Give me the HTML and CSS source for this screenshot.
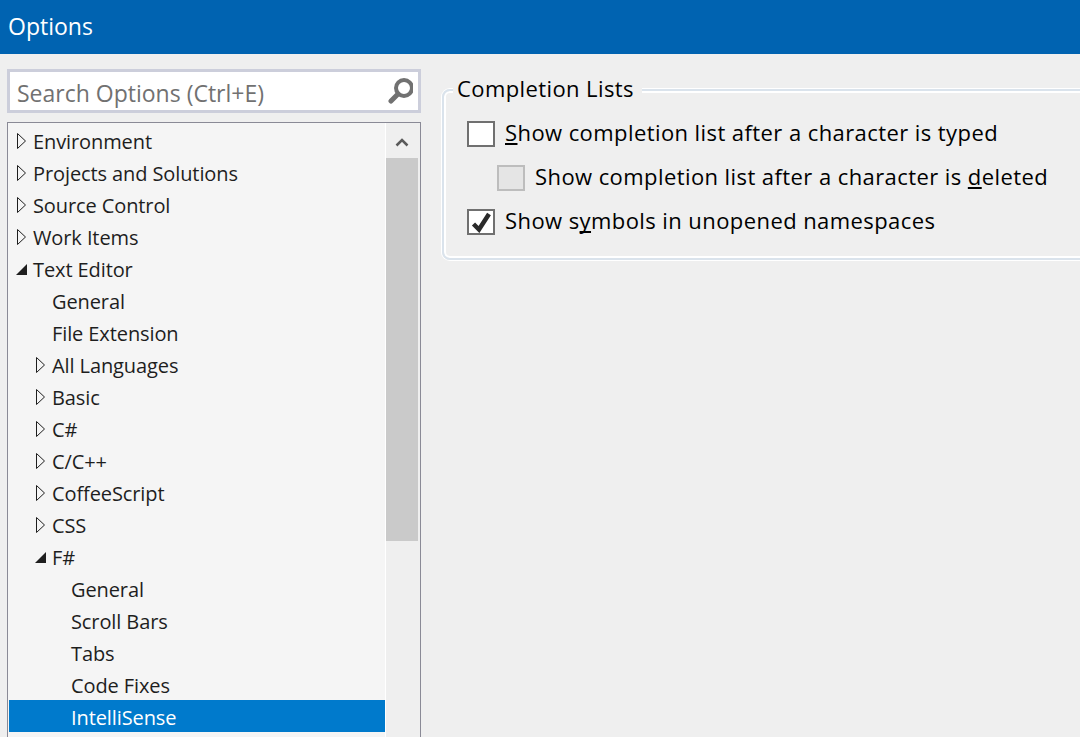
FILE: index.html
```html
<!DOCTYPE html>
<html lang="en">
<head>
    <meta charset="UTF-8">
    <title>Options</title>
    <link rel="stylesheet" href="styles.css">
</head>
<body>

    <header class="title-bar">Options</header>

    <div class="main">
        <div class="left-pane">
            <div class="search-box">
                <span class="search-text">Search Options (Ctrl+E)</span>
                <svg class="search-icon" width="26" height="26" viewBox="0 0 26 26">
                    <circle cx="17" cy="10" r="8" fill="none" stroke="#717171" stroke-width="4"/>
                    <path d="M11 16 L4 23" stroke="#717171" stroke-width="5" stroke-linecap="round"/>
                </svg>
            </div>

            <div class="tree-box">
                <ul class="tree">
                    <li class="row lvl0"><svg class="arrow" width="12" height="18" viewBox="0 0 12 18"><path d="M1.5 1.5 L9.5 9 L1.5 16.5 Z" fill="none" stroke="#1e1e1e"/></svg>Environment</li>
                    <li class="row lvl0"><svg class="arrow" width="12" height="18" viewBox="0 0 12 18"><path d="M1.5 1.5 L9.5 9 L1.5 16.5 Z" fill="none" stroke="#1e1e1e"/></svg>Projects and Solutions</li>
                    <li class="row lvl0"><svg class="arrow" width="12" height="18" viewBox="0 0 12 18"><path d="M1.5 1.5 L9.5 9 L1.5 16.5 Z" fill="none" stroke="#1e1e1e"/></svg>Source Control</li>
                    <li class="row lvl0"><svg class="arrow" width="12" height="18" viewBox="0 0 12 18"><path d="M1.5 1.5 L9.5 9 L1.5 16.5 Z" fill="none" stroke="#1e1e1e"/></svg>Work Items</li>
                    <li class="row lvl0"><svg class="arrow" width="12" height="18" viewBox="0 0 12 18"><path d="M0 15 L11 15 L11 4 Z" fill="#1e1e1e"/></svg>Text Editor</li>
                    <li class="row lvl1 leaf">General</li>
                    <li class="row lvl1 leaf">File Extension</li>
                    <li class="row lvl1"><svg class="arrow" width="12" height="18" viewBox="0 0 12 18"><path d="M1.5 1.5 L9.5 9 L1.5 16.5 Z" fill="none" stroke="#1e1e1e"/></svg>All Languages</li>
                    <li class="row lvl1"><svg class="arrow" width="12" height="18" viewBox="0 0 12 18"><path d="M1.5 1.5 L9.5 9 L1.5 16.5 Z" fill="none" stroke="#1e1e1e"/></svg>Basic</li>
                    <li class="row lvl1"><svg class="arrow" width="12" height="18" viewBox="0 0 12 18"><path d="M1.5 1.5 L9.5 9 L1.5 16.5 Z" fill="none" stroke="#1e1e1e"/></svg>C#</li>
                    <li class="row lvl1"><svg class="arrow" width="12" height="18" viewBox="0 0 12 18"><path d="M1.5 1.5 L9.5 9 L1.5 16.5 Z" fill="none" stroke="#1e1e1e"/></svg>C/C++</li>
                    <li class="row lvl1"><svg class="arrow" width="12" height="18" viewBox="0 0 12 18"><path d="M1.5 1.5 L9.5 9 L1.5 16.5 Z" fill="none" stroke="#1e1e1e"/></svg>CoffeeScript</li>
                    <li class="row lvl1"><svg class="arrow" width="12" height="18" viewBox="0 0 12 18"><path d="M1.5 1.5 L9.5 9 L1.5 16.5 Z" fill="none" stroke="#1e1e1e"/></svg>CSS</li>
                    <li class="row lvl1"><svg class="arrow" width="12" height="18" viewBox="0 0 12 18"><path d="M0 15 L11 15 L11 4 Z" fill="#1e1e1e"/></svg>F#</li>
                    <li class="row lvl2 leaf">General</li>
                    <li class="row lvl2 leaf">Scroll Bars</li>
                    <li class="row lvl2 leaf">Tabs</li>
                    <li class="row lvl2 leaf">Code Fixes</li>
                    <li class="row lvl2 leaf selected">IntelliSense</li>
                </ul>
                <div class="scrollbar">
                    <div class="scroll-up">
                        <svg width="14" height="10" viewBox="0 0 14 10"><path d="M1.5 8.5 L7 3 L12.5 8.5" fill="none" stroke="#5a5a5a" stroke-width="2.5"/></svg>
                    </div>
                    <div class="scroll-thumb"></div>
                </div>
            </div>
        </div>

        <div class="right-pane">
            <fieldset class="group">
                <legend>Completion Lists</legend>
                <label class="option">
                    <span class="checkbox"></span>
                    <span class="option-text"><u>S</u>how completion list after a character is typed</span>
                </label>
                <label class="option sub">
                    <span class="checkbox disabled"></span>
                    <span class="option-text">Show completion list after a character is <u>d</u>eleted</span>
                </label>
                <label class="option">
                    <span class="checkbox">
                        <svg width="24" height="22" viewBox="0 0 24 22"><path d="M4.5 13 L10 18.5 L20 3" fill="none" stroke="#2a2a2a" stroke-width="4.5"/></svg>
                    </span>
                    <span class="option-text">Show s<u>y</u>mbols in unopened namespaces</span>
                </label>
            </fieldset>
        </div>
    </div>

</body>
</html>
```

FILE: styles.css
```css
html, body {
    margin: 0;
    height: 737px;
    overflow: hidden;
}
body {
    font-family: "Open Sans", "Noto Sans", sans-serif;
    font-size: 20px;
    color: #1e1e1e;
    background-color: #efefef;
}
.title-bar {
    height: 54px;
    line-height: 52px;
    padding-left: 8px;
    font-size: 23px;
    color: white;
    background-color: #0063b1;
}
.main {
    display: flex;
    height: 683px;
    overflow: hidden;
}
.left-pane {
    width: 414px;
    margin-left: 7px;
    padding-top: 15px;
    flex-shrink: 0;
}
.search-box {
    display: flex;
    align-items: center;
    justify-content: space-between;
    box-sizing: border-box;
    height: 44px;
    padding: 0 5px 0 7px;
    background-color: white;
    border: 3px solid #ccceDB;
    color: #717171;
    font-size: 23px;
}
.search-text {
    padding-top: 3px;
}
.tree-box {
    display: flex;
    box-sizing: border-box;
    height: 640px;
    margin-top: 9px;
    border: 1px solid #8a8a96;
    background-color: #f5f5f5;
}
.tree {
    list-style: none;
    flex: 1;
    margin: 0;
    padding: 1px 0 0 1px;
    letter-spacing: -0.1px;
}
.row {
    display: flex;
    align-items: center;
    box-sizing: border-box;
    height: 32px;
    padding-top: 2px;
    white-space: nowrap;
}
.lvl0 { padding-left: 7px; }
.lvl1 { padding-left: 26px; }
.lvl2 { padding-left: 45px; }
.arrow {
    width: 12px;
    margin-right: 5px;
    flex-shrink: 0;
}
.leaf.lvl1 { padding-left: 43px; }
.leaf.lvl2 { padding-left: 62px; }
.selected {
    background-color: #007acc;
    color: white;
}
.scrollbar {
    width: 35px;
    border-left: 1px solid white;
    background-color: #efefef;
    flex-shrink: 0;
    box-sizing: border-box;
}
.scroll-up {
    display: flex;
    align-items: center;
    justify-content: center;
    box-sizing: border-box;
    height: 35px;
    padding: 2px 2px 0 0;
}
.scroll-thumb {
    height: 383px;
    margin-right: 2px;
    background-color: #cacaca;
}
.right-pane {
    flex: 1;
    min-width: 0;
    padding: 20px 0 0 21px;
}
.group {
    box-sizing: border-box;
    width: 700px;
    height: 186px;
    margin: 0;
    padding: 6px 0 0 23px;
    border: 2px solid #dae3ec;
    border-radius: 8px;
    box-shadow: 0 0 0 1px white, inset 0 0 0 2px white;
}
.group legend {
    padding: 0 8px 4px 4px;
    margin-left: -14px;
    line-height: 28px;
    font-size: 22px;
    letter-spacing: 0.4px;
    color: black;
    background-color: #efefef;
}
.option {
    display: flex;
    align-items: center;
    height: 44px;
    font-size: 22px;
    letter-spacing: 0.42px;
    color: black;
    white-space: nowrap;
}
.option-text {
    padding-bottom: 4px;
}
.option-text u {
    text-decoration-skip-ink: none;
}
.option.sub { padding-left: 30px; }
.checkbox {
    display: block;
    box-sizing: border-box;
    width: 28px;
    height: 26px;
    margin-right: 10px;
    border: 2px solid #707070;
    background-color: white;
}
.checkbox.disabled {
    border-color: #bdbdbd;
    background-color: #e5e5e5;
}
.checkbox svg { display: block; }
```
